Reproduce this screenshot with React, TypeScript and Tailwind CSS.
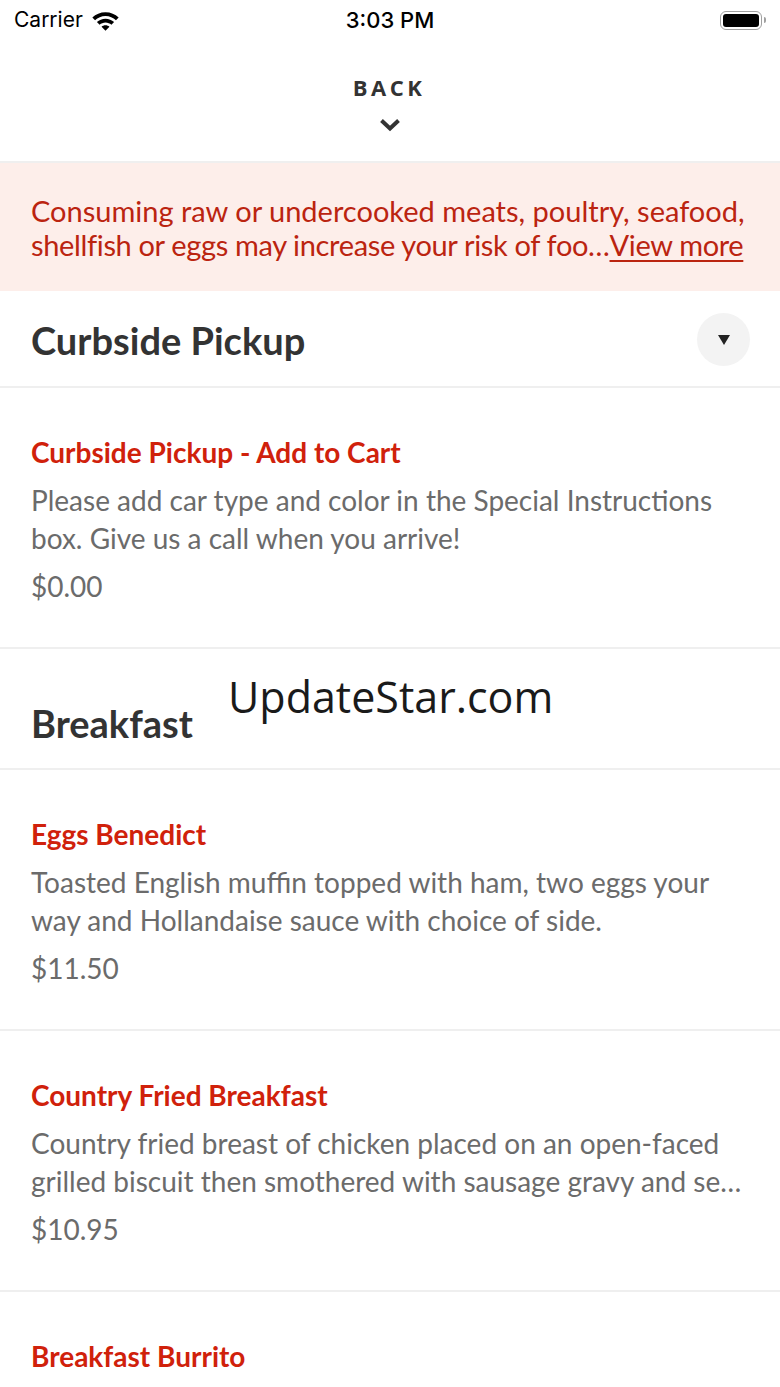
import React from "react";

const RED = "text-[#d0210b]";

type Item = { title: string; desc: string[]; price?: string };

const curbside: Item[] = [
  {
    title: "Curbside Pickup - Add to Cart",
    desc: [
      "Please add car type and color in the Special Instructions",
      "box. Give us a call when you arrive!",
    ],
    price: "$0.00",
  },
];

const breakfast: Item[] = [
  {
    title: "Eggs Benedict",
    desc: [
      "Toasted English muffin topped with ham, two eggs your",
      "way and Hollandaise sauce with choice of side.",
    ],
    price: "$11.50",
  },
  {
    title: "Country Fried Breakfast",
    desc: [
      "Country fried breast of chicken placed on an open-faced",
      "grilled biscuit then smothered with sausage gravy and se…",
    ],
    price: "$10.95",
  },
  // only the title of this one is on screen
  { title: "Breakfast Burrito", desc: [] },
];

function StatusBar() {
  return (
    <div className="relative flex h-[40px] items-center px-[14px] font-['Inter',sans-serif] text-[21px] text-black">
      <div className="flex items-center gap-[8px]">
        <span>Carrier</span>
        <svg width="29" height="21" viewBox="0 0 28 20">
          <path d="M14 2C9 2 4.6 3.9 1.3 7l2.6 2.7C6.6 7.2 10.1 5.6 14 5.6s7.4 1.6 10.1 4.1L26.7 7C23.4 3.9 19 2 14 2z" fill="#000" />
          <path d="M14 8.3c-3.2 0-6.1 1.2-8.3 3.2l2.6 2.7c1.5-1.3 3.5-2.2 5.7-2.2s4.2.9 5.7 2.2l2.6-2.7C20.1 9.5 17.2 8.3 14 8.3z" fill="#000" />
          <path d="M14 14.6c-1.5 0-2.8.5-3.8 1.4L14 19.8l3.8-3.8c-1-.9-2.3-1.4-3.8-1.4z" fill="#000" />
        </svg>
      </div>
      <span className="absolute left-1/2 -translate-x-1/2 text-[22px] font-medium">3:03 PM</span>
      <div className="ml-auto flex items-center">
        <div className="flex h-[19px] w-[42px] items-center rounded-[6px] border-[1.5px] border-[#a0a0a0] p-[2px]">
          <div className="h-full w-full rounded-[3px] bg-black" />
        </div>
        <div className="ml-[2px] h-[6px] w-[2px] rounded-r-sm bg-[#a0a0a0]" />
      </div>
    </div>
  );
}

function MenuItem({ item }: { item: Item }) {
  return (
    <div className="border-b-2 border-[#efefef] px-[31px] pt-[47px] pb-[42px]">
      <div className={`text-[28px] font-bold leading-[34px] ${RED}`}>{item.title}</div>
      {item.desc.length > 0 && (
        <div className="mt-[12px] text-[28px] leading-[38px] text-[#6b6b6b]">
          {item.desc.map((l) => (
            <div key={l} className="whitespace-nowrap">
              {l}
            </div>
          ))}
        </div>
      )}
      {item.price && (
        <div className="mt-[10px] text-[28px] leading-[38px] text-[#6b6b6b]">{item.price}</div>
      )}
    </div>
  );
}

export default function App() {
  return (
    <div className="relative h-[1387px] w-[780px] overflow-hidden bg-white font-['Lato',sans-serif]">
      <StatusBar />
      <div className="flex h-[123px] flex-col items-center border-b-2 border-[#efefef] pt-[33px]">
        <span className="-ml-[2px] font-['Open_Sans',sans-serif] text-[22px] font-bold leading-[28px] tracking-[3.5px] text-[#333]">
          BACK
        </span>
        <svg className="mt-[17px]" width="22" height="14" viewBox="0 0 22 14">
          <path d="M2.5 2.5L11 10.5L19.5 2.5" fill="none" stroke="#333" strokeWidth="4" />
        </svg>
      </div>

      <div className="bg-[#fdeeea] px-[31px] pt-[31px] pb-[29px] text-[29px] leading-[34px] text-[#bb2410]">
        <div className="whitespace-nowrap">Consuming raw or undercooked meats, poultry, seafood,</div>
        <div className="whitespace-nowrap tracking-[-0.35px]">
          shellfish or eggs may increase your risk of foo…<span className="underline underline-offset-4">View more</span>
        </div>
      </div>

      <div className="flex items-center justify-between border-b-2 border-[#efefef] pt-[22px] pb-[20px] pl-[31px] pr-[30px]">
        <span className="text-[38px] font-bold leading-[44px] text-[#333]">Curbside Pickup</span>
        <div className="flex h-[53px] w-[53px] items-center justify-center rounded-full bg-[#f3f3f3]">
          <svg width="12" height="10" viewBox="0 0 12 10">
            <path d="M0 0H12L6 10Z" fill="#222" />
          </svg>
        </div>
      </div>
      {curbside.map((i) => (
        <MenuItem key={i.title} item={i} />
      ))}

      <div className="border-b-2 border-[#efefef] pt-[52px] pb-[23px] pl-[31px]">
        <span className="text-[38px] font-bold leading-[44px] text-[#333]">Breakfast</span>
      </div>
      {breakfast.map((i) => (
        <MenuItem key={i.title} item={i} />
      ))}

      <div className="pointer-events-none absolute left-[228px] top-[670px] font-['Open_Sans',sans-serif] text-[43px] leading-[54px] text-[#1a1a1a]">
        UpdateStar.com
      </div>
    </div>
  );
}
